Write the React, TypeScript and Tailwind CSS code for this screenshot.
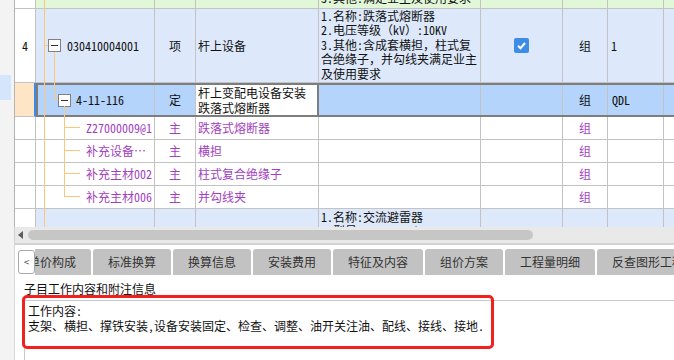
import React from 'react'

// 表格/正文用的等宽字体（仿宋体位图效果），标签页用黑体
const MONO = "font-['Noto_Sans_Mono_CJK_SC','Liberation_Mono','Noto_Sans_CJK_SC',monospace]"
const SANS = "font-['Noto_Sans_CJK_SC','Noto_Sans',sans-serif]"

const LINE = 'border-[#c3c3c3]'
const PURPLE = 'text-[#a23fc0]'

type CellProps = {
  w: string
  className?: string
  children?: React.ReactNode
}

function Cell({ w, className = '', children }: CellProps) {
  return (
    <div className={`${w} shrink-0 border-r ${LINE} ${className}`}>{children}</div>
  )
}

function Minus() {
  return (
    <span className="flex h-[13px] w-[13px] shrink-0 items-center justify-center border border-[#808080] bg-white">
      <span className="h-px w-[7px] bg-[#333]" />
    </span>
  )
}

function Check() {
  return (
    <span className="flex h-[15px] w-[15px] items-center justify-center rounded-[2px] bg-[#3d8de6]">
      <svg width="11" height="11" viewBox="0 0 11 11">
        <path d="M2 5.8 L4.5 8.2 L9 3" fill="none" stroke="white" strokeWidth="2" />
      </svg>
    </span>
  )
}

const subRows = [
  { code: 'Z27000009@1', name: '跌落式熔断器' },
  { code: '补充设备…', name: '横担' },
  { code: '补充主材002', name: '柱式复合绝缘子' },
  { code: '补充主材006', name: '并勾线夹' },
]

const tabs = ['单价构成', '标准换算', '换算信息', '安装费用', '特征及内容', '组价方案', '工程量明细', '反查图形工程量']

export default function App() {
  return (
    <div className={`relative flex h-[360px] w-[674px] overflow-hidden bg-white text-[12px] text-[#111] ${MONO}`}>
      {/* 左侧窄条 */}
      <div className="w-[14px] shrink-0 bg-[#f3f3f3]">
        <div className="mt-[75px] h-[25px] w-[11px] bg-[#d3e6fb]" />
      </div>

      <div className="flex min-w-0 flex-1 flex-col">
        {/* 表格 */}
        <div className="h-[227px] overflow-hidden border-l border-[#b4b4b4]">
          {/* 上一行（被裁掉） */}
          <div className={`flex h-[9px] border-b ${LINE}`}>
            <Cell w="w-[21px]" className="bg-white" />
            <Cell w="w-[119px]" className="bg-[#e2f7d8]" />
            <Cell w="w-[41px]" className="bg-[#e2f7d8]" />
            <Cell w="w-[123px]" className="bg-[#e2f7d8]" />
            <Cell w="w-[162px]" className="overflow-hidden bg-[#e2f7d8] pl-[2px]">
              <div className="-mt-[9px] leading-[14.4px]">3.其他:满足业主及使用要求</div>
            </Cell>
            <Cell w="w-[82px]" className="bg-[#e2f7d8]" />
            <Cell w="w-[45px]" className="bg-[#e2f7d8]" />
            <Cell w="w-[56px]" className="bg-[#e2f7d8]" />
            <div className="flex-1 bg-[#e2f7d8]" />
          </div>

          {/* 清单行 4 */}
          <div className={`flex h-[74px] border-b ${LINE}`}>
            <Cell w="w-[21px]" className="flex items-center justify-center bg-white">4</Cell>
            <Cell w="w-[119px]" className="flex items-center bg-[#dde9fb] pl-[12px]">
              <Minus />
              <span className="ml-[6px]">030410004001</span>
            </Cell>
            <Cell w="w-[41px]" className="flex items-center justify-center bg-[#dde9fb]">项</Cell>
            <Cell w="w-[123px]" className="flex items-center bg-[#dde9fb] pl-[2px]">杆上设备</Cell>
            <Cell w="w-[162px]" className="overflow-hidden whitespace-nowrap bg-[#dde9fb] pl-[2px] leading-[14.4px]">
              <div>1.名称:跌落式熔断器</div>
              <div>2.电压等级（kV）:10KV</div>
              <div>3.其他:含成套横担，柱式复</div>
              <div>合绝缘子，并勾线夹满足业主</div>
              <div>及使用要求</div>
            </Cell>
            <Cell w="w-[82px]" className="flex items-center justify-center bg-[#dde9fb]">
              <Check />
            </Cell>
            <Cell w="w-[45px]" className="flex items-center justify-center bg-[#dde9fb]">组</Cell>
            <Cell w="w-[56px]" className="flex items-center bg-[#dde9fb] pl-[3px]">1</Cell>
            <div className="flex-1 bg-[#dde9fb]" />
          </div>

          {/* 当前定额行 */}
          <div className="flex h-[34px]">
            <div className={`w-[21px] shrink-0 border-b border-r-2 ${LINE} border-r-[#3c8ae6] bg-[#fde5c6]`} />
            <div className="flex flex-1 border-y-2 border-l-2 border-[#7d7d7d] bg-[#b4d4fb]">
              <Cell w="w-[117px]" className="flex items-center pl-[20px]">
                <Minus />
                <span className="ml-[5px]">4-11-116</span>
              </Cell>
              <Cell w="w-[41px]" className="flex items-center justify-center">定</Cell>
              <div className="w-[123px] shrink-0 border-r-2 border-[#7d7d7d] bg-white pl-[2px] leading-[15px]">
                <div>杆上变配电设备安装</div>
                <div>跌落式熔断器</div>
              </div>
              <Cell w="w-[162px]" />
              <Cell w="w-[82px]" />
              <Cell w="w-[45px]" className="flex items-center justify-center">组</Cell>
              <Cell w="w-[56px]" className="flex items-center pl-[4px]">QDL</Cell>
              <div className="flex-1" />
            </div>
          </div>

          {/* 主材行 */}
          {subRows.map((r) => (
            <div key={r.code} className={`flex h-[23px] border-b ${LINE} bg-white`}>
              <Cell w="w-[21px]" />
              <Cell w="w-[119px]" className={`flex items-center pl-[50px] ${PURPLE}`}>{r.code}</Cell>
              <Cell w="w-[41px]" className={`flex items-center justify-center ${PURPLE}`}>主</Cell>
              <Cell w="w-[123px]" className={`flex items-center pl-[2px] ${PURPLE}`}>{r.name}</Cell>
              <Cell w="w-[162px]" />
              <Cell w="w-[82px]" />
              <Cell w="w-[45px]" className={`flex items-center justify-center ${PURPLE}`}>组</Cell>
              <Cell w="w-[56px]" />
              <div className="flex-1" />
            </div>
          ))}

          {/* 下一行（被裁掉） */}
          <div className="flex h-[40px]">
            <Cell w="w-[21px]" className="bg-white" />
            <Cell w="w-[119px]" className="bg-[#dde9fb]" />
            <Cell w="w-[41px]" className="bg-[#dde9fb]" />
            <Cell w="w-[123px]" className="bg-[#dde9fb]" />
            <Cell w="w-[162px]" className="whitespace-nowrap bg-[#dde9fb] pl-[2px] pt-px leading-[14.4px]">
              <div>1.名称:交流避雷器</div>
              <div>2.型号:YH5WS-17/50</div>
            </Cell>
            <Cell w="w-[82px]" className="bg-[#dde9fb]" />
            <Cell w="w-[45px]" className="bg-[#dde9fb]" />
            <Cell w="w-[56px]" className="bg-[#dde9fb]" />
            <div className="flex-1 bg-[#dde9fb]" />
          </div>
        </div>

        {/* 横向滚动条 */}
        <div className="flex h-[16px] items-center border-l border-[#d0d0d0] bg-[#e9e9e9] pl-[3px]">
          <span className="h-0 w-0 border-y-[4px] border-r-[5px] border-y-transparent border-r-[#5c5c5c]" />
          <span className="ml-[5px] h-[10px] w-[505px] rounded-full bg-[#c6c6c6]" />
        </div>
        <div className="h-[2px] bg-[#d2d2d2]" />

        {/* 标签页 */}
        <div className={`flex h-[31px] border-l border-[#d8d8d8] pl-[3px] pt-[4px] ${SANS}`}>
          <button className="relative z-10 mt-px flex h-[24px] w-[17px] shrink-0 items-center justify-center rounded-[3px] border border-[#a8a8a8] bg-white text-[10px] leading-none text-[#555]">
            &lt;
          </button>
          <div className="flex min-w-0 flex-1 gap-[2px] overflow-hidden">
            {tabs.map((t, i) => (
              <div
                key={t}
                className={`flex h-[26px] shrink-0 items-center rounded-t-[3px] bg-[#c2c2c2] px-[15px] text-[12px] text-[#333] ${i === 0 ? '-ml-[22px]' : ''}`}
              >
                {t}
              </div>
            ))}
          </div>
        </div>

        {/* 子目工作内容 */}
        <div className="flex-1 border-l border-[#d8d8d8] pt-[6px]">
          <div className="pl-[9px] leading-[14px]">子目工作内容和附注信息</div>
          <div className="ml-[9px] mt-[4px] h-full border-l border-t border-[#c8c8c8] pl-[3px] pt-[3px] leading-[14.5px]">
            <div>工作内容:</div>
            <div className="whitespace-nowrap">支架、横担、撑铁安装,设备安装固定、检查、调整、油开关注油、配线、接线、接地.</div>
          </div>
        </div>
      </div>

      {/* 树形连线 */}
      <svg className="pointer-events-none absolute left-0 top-0" width="674" height="227">
        <g stroke="#fcc77c" strokeWidth="1" shapeRendering="crispEdges">
          <line x1="44.5" y1="0" x2="44.5" y2="227" />
          <line x1="44" y1="45.5" x2="48" y2="45.5" />
          <line x1="54.5" y1="52" x2="54.5" y2="100" />
          <line x1="54" y1="99.5" x2="58" y2="99.5" />
          <line x1="64.5" y1="106" x2="64.5" y2="197" />
          {[127.5, 150.5, 173.5, 196.5].map((y) => (
            <line key={y} x1="64" y1={y} x2="80" y2={y} />
          ))}
        </g>
      </svg>

      {/* 红色标注框 */}
      <div className="pointer-events-none absolute left-[22px] top-[295px] h-[54px] w-[472px] rounded-[5px] border-[3px] border-[#f3201e]" />
    </div>
  )
}
